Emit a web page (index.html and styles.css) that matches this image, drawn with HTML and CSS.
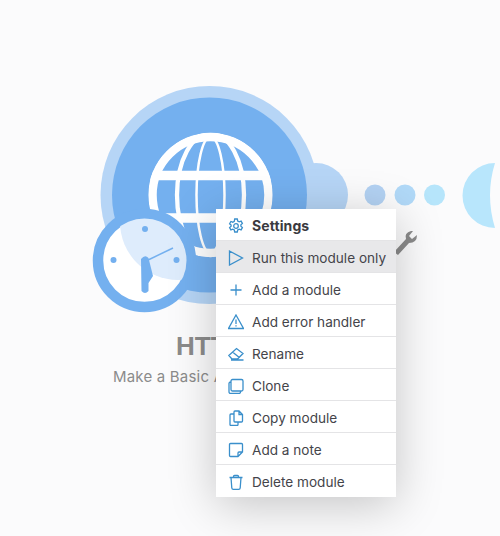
FILE: index.html
```html
<!DOCTYPE html>
<html>
    <head>
        <meta charset="utf-8">
        <title>Module menu</title>
        <link rel="stylesheet" href="styles.css">
    </head>
    <body>
        <div class="canvas">
            <svg class="scene" width="500" height="536" viewBox="0 0 500 536">
                <defs>
                    <clipPath id="globe-clip"><circle cx="210.500" cy="195" r="62.200"/></clipPath>
                    <clipPath id="face-clip"><circle cx="144.500" cy="260.500" r="42"/></clipPath>
                </defs>

                <!-- connector bubbles -->
                <circle cx="316" cy="195" r="32" fill="#b6d5f6"/>
                <circle cx="375" cy="195" r="10.500" fill="#b3d2f3"/>
                <circle cx="405" cy="195" r="10.500" fill="#b1d9f8"/>
                <circle cx="434.500" cy="195" r="10.500" fill="#b6e5fb"/>
                <path d="M495 163 A32.500 32.500 0 0 0 495 228 Q485 195 495 163 Z" fill="#b8e6fc"/>

                <!-- module -->
                <circle cx="209.500" cy="195" r="109" fill="#b6d5f6"/>
                <circle cx="209.500" cy="195" r="97.500" fill="#74b0ef"/>

                <!-- globe -->
                <g fill="none" stroke="#fff" clip-path="url(#globe-clip)">
                    <circle cx="210.500" cy="195" r="58" stroke-width="8.500"/>
                    <ellipse cx="210.500" cy="195" rx="33.500" ry="62" stroke-width="4.300"/>
                    <ellipse cx="210.500" cy="195" rx="14" ry="58" stroke-width="2.500"/>
                    <path d="M148 175.500 H273 M148 218 H273" stroke-width="9.500"/>
                </g>

                <!-- clock -->
                <circle cx="144.500" cy="260.500" r="46.500" fill="#fff" stroke="#74b0ef" stroke-width="10.500"/>
                <g clip-path="url(#face-clip)">
                    <circle cx="178" cy="222" r="58" fill="#deecfc"/>
                </g>
                <g fill="#74b0ef">
                    <circle cx="145" cy="229" r="3"/>
                    <circle cx="113.500" cy="260" r="3"/>
                    <circle cx="176.500" cy="260" r="3"/>
                    <path d="M141 259 Q145 254 148.500 258 L153 276 L148.500 283 V291 Q145 295 141.500 291 Z"/>
                </g>
                <path d="M146 261 L173 248" stroke="#74b0ef" stroke-width="1.500"/>

                <!-- wrench -->
                <path d="M394 252 L406 239 Q404 233 411 231 L413 231 L409 236 L412 239 L417 235 Q417 243 409 243 L398 255 Z" fill="#8b8b8b"/>
            </svg>

            <div class="label">
                <div class="label-title">HTTP</div>
                <div class="label-sub">Make a Basic Auth request</div>
            </div>

            <div class="menu">
                <div class="menu-item bold">
                    <svg class="icon" viewBox="0 0 16 16">
                        <path d="M6.700 1h2.600l.4 2 1.500.8 1.900-.7 1.300 2.300-1.500 1.300v1.600l1.500 1.300-1.300 2.300-1.900-.7-1.500.8-.4 2H6.700l-.4-2-1.500-.8-1.900.7-1.300-2.300 1.500-1.300V7.100L1.600 5.800l1.300-2.300 1.900.7 1.500-.8z"/>
                        <circle cx="8" cy="8" r="2.300"/>
                    </svg>
                    Settings
                </div>
                <div class="menu-item hover">
                    <svg class="icon" viewBox="0 0 16 16"><path d="M1.500 1 L14.500 8 L1.500 15 Z"/></svg>
                    Run this module only
                </div>
                <div class="menu-item">
                    <svg class="icon" viewBox="0 0 16 16"><path d="M8 2.500V13.500M2.500 8H13.500"/></svg>
                    Add a module
                </div>
                <div class="menu-item">
                    <svg class="icon" viewBox="0 0 16 16"><path d="M8 1 L15.500 14.500 H.5 Z M8 5.500V10M8 11.300V12.500"/></svg>
                    Add error handler
                </div>
                <div class="menu-item">
                    <svg class="icon" viewBox="0 0 16 16"><path d="M.8 9.500 L8.500 2.500 L15 7.500 L9.500 13 H4 Z M4.500 6 L11 11.200 M3 14H15.500"/></svg>
                    Rename
                </div>
                <div class="menu-item">
                    <svg class="icon" viewBox="0 0 16 16"><path d="M4.500 1.500h9a1.500 1.500 0 0 1 1.500 1.500v8.500a1.500 1.500 0 0 1-1.500 1.500h-9a1.500 1.500 0 0 1-1.500-1.500V3a1.500 1.500 0 0 1 1.500-1.500zM3 4H2.500A1.500 1.500 0 0 0 1 5.500V14a1.500 1.500 0 0 0 1.500 1.500H11a1.500 1.500 0 0 0 1.500-1.500v-1"/></svg>
                    Clone
                </div>
                <div class="menu-item">
                    <svg class="icon" viewBox="0 0 16 16"><path d="M7 1h4l3.500 3.500v6.500a1 1 0 0 1-1 1H7a1 1 0 0 1-1-1V2a1 1 0 0 1 1-1zM11 1V4.500H14.500M6 4H3a1 1 0 0 0-1 1v9.500a1 1 0 0 0 1 1h6a1 1 0 0 0 1-1V12"/></svg>
                    Copy module
                </div>
                <div class="menu-item">
                    <svg class="icon" viewBox="0 0 16 16"><path d="M2.500 1.500h11a1 1 0 0 1 1 1v7.500L10 14.500H2.500a1 1 0 0 1-1-1v-11a1 1 0 0 1 1-1zM14.500 10H11a1 1 0 0 0-1 1v3.500"/></svg>
                    Add a note
                </div>
                <div class="menu-item">
                    <svg class="icon" viewBox="0 0 16 16"><path d="M1.500 3.500H14.500M5.500 3.500V2.500a1 1 0 0 1 1-1h3a1 1 0 0 1 1 1v1M3 3.500L3.800 14a1.500 1.500 0 0 0 1.500 1.300h5.400a1.500 1.500 0 0 0 1.500-1.300L13 3.500"/></svg>
                    Delete module
                </div>
            </div>
        </div>
    </body>
</html>
```

FILE: styles.css
```css
body {
    margin: 0;
    background: #fbfbfc;
    font-family: Inter, "Liberation Sans", sans-serif;
}
.canvas {
    position: relative;
    width: 500px;
    height: 536px;
    overflow: hidden;
}
.scene {
    position: absolute;
    left: 0;
    top: 0;
}
.label {
    position: absolute;
    left: 60px;
    top: 330px;
    width: 300px;
    text-align: center;
    color: #8b8b8b;
}
.label-title {
    font-family: "Liberation Sans", sans-serif;
    font-size: 26px;
    font-weight: bold;
    line-height: 32px;
}
.label-sub {
    font-size: 15px;
    letter-spacing: 0.2px;
    line-height: 20px;
    margin-top: 5px;
}
.menu {
    position: absolute;
    left: 216px;
    top: 209px;
    width: 180px;
    background: #fff;
    box-shadow: 0 8px 44px rgba(0, 0, 0, 0.22);
}
.menu-item {
    display: flex;
    align-items: center;
    gap: 8px;
    height: 32px;
    box-sizing: border-box;
    padding-left: 12px;
    padding-top: 2px;
    border-bottom: 1px solid #e4e4e6;
    font-size: 13.6px;
    color: #44444a;
    white-space: nowrap;
}
.menu-item:last-child {
    border-bottom-color: transparent;
}
.bold {
    font-size: 14px;
    font-weight: bold;
    letter-spacing: 0.1px;
    color: #3a3a3f;
}
.hover {
    background: #e8e8ea;
}
.icon {
    width: 16px;
    height: 16px;
    flex: none;
    fill: none;
    stroke: #3a8fcb;
    stroke-width: 1.300;
}
```
